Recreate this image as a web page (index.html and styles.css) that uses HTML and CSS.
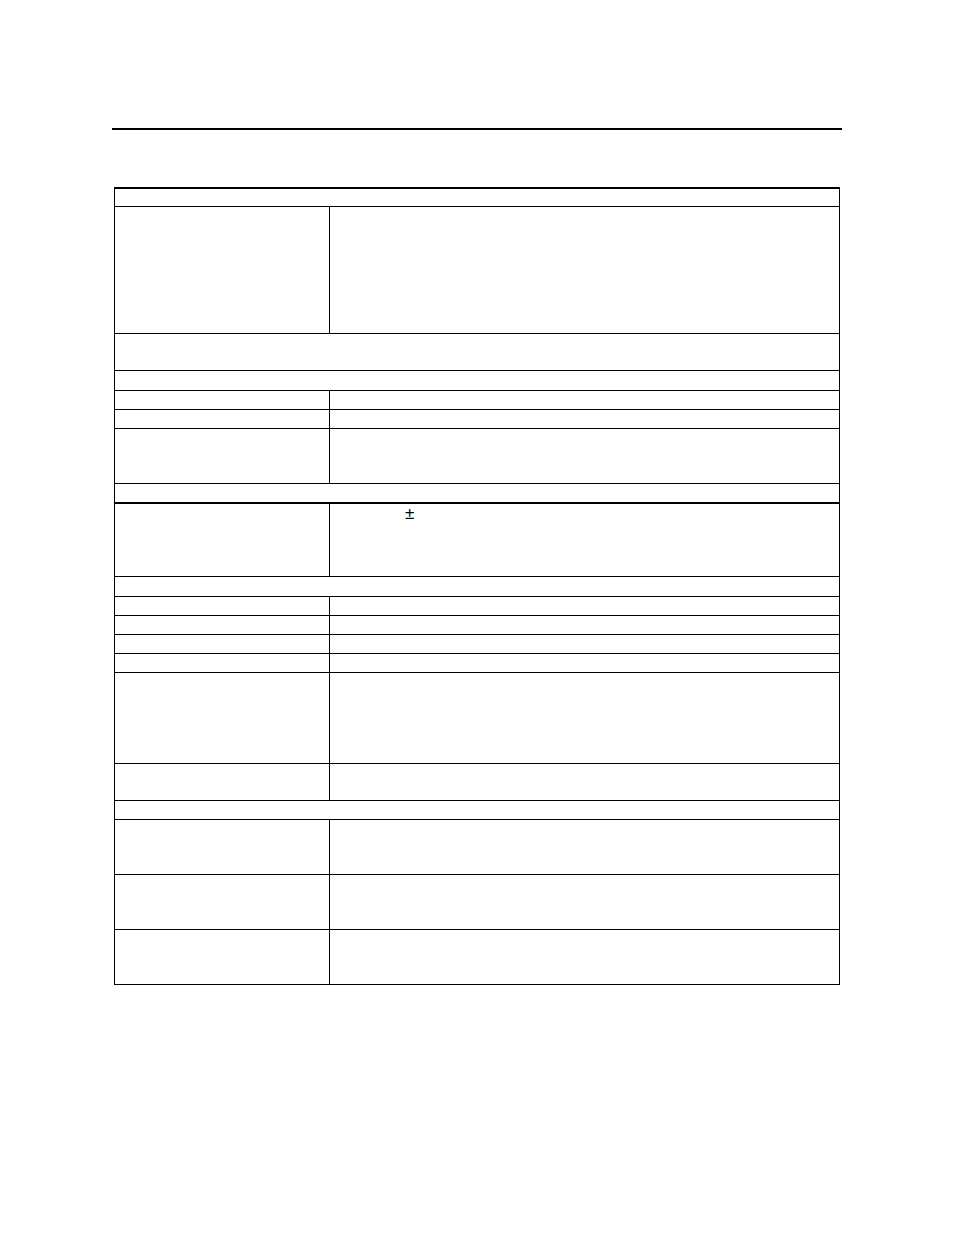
FILE: index.html
```html
<!DOCTYPE html>
<html>
<head>
<meta charset="utf-8">
<link rel="stylesheet" href="styles.css">
</head>
<body>
<div class="page">
  <div class="rule"></div>
  <div class="spec">
    <div class="row full h17"></div>
    <div class="row h126"><div class="lc"></div><div class="rc"></div></div>
    <div class="row full h36"></div>
    <div class="row full h19"></div>
    <div class="row h18"><div class="lc"></div><div class="rc"></div></div>
    <div class="row h18"><div class="lc"></div><div class="rc"></div></div>
    <div class="row h54"><div class="lc"></div><div class="rc"></div></div>
    <div class="row full h18 thick"></div>
    <div class="row h72"><div class="lc"></div><div class="rc"><span class="pm">±</span></div></div>
    <div class="row full h19"></div>
    <div class="row h18"><div class="lc"></div><div class="rc"></div></div>
    <div class="row h18"><div class="lc"></div><div class="rc"></div></div>
    <div class="row h18"><div class="lc"></div><div class="rc"></div></div>
    <div class="row h18"><div class="lc"></div><div class="rc"></div></div>
    <div class="row h90"><div class="lc"></div><div class="rc"></div></div>
    <div class="row h36"><div class="lc"></div><div class="rc"></div></div>
    <div class="row full h18"></div>
    <div class="row h54"><div class="lc"></div><div class="rc"></div></div>
    <div class="row h54"><div class="lc"></div><div class="rc"></div></div>
    <div class="row h54"><div class="lc"></div><div class="rc"></div></div>
  </div>
</div>
</body>
</html>
```

FILE: styles.css
```css
html, body {
  margin: 0;
  padding: 0;
  background: #ffffff;
}
body {
  font-family: "Liberation Sans", Arial, sans-serif;
  font-size: 13px;
  color: #000000;
}
.page {
  padding-top: 128px;
  padding-left: 112px;
  display: flex;
  flex-direction: column;
}
.rule {
  width: 730px;
  height: 2px;
  background: #000000;
}
.spec {
  margin-top: 57px;
  margin-left: 2px;
  width: 724px;
  border-top: 2px solid #000000;
  border-left: 1px solid #000000;
  border-right: 1px solid #000000;
  display: flex;
  flex-direction: column;
}
.row {
  display: flex;
  border-bottom: 1px solid #000000;
  box-sizing: content-box;
}
.row.thick {
  border-bottom: 2px solid #000000;
}
.lc {
  width: 214px;
  border-right: 1px solid #000000;
}
.rc {
  flex: 1;
  line-height: 18px;
}
.pm {
  display: inline-block;
  margin-left: 75px;
  margin-top: 1px;
  font-size: 17px;
  line-height: 18px;
}
.h17 { height: 17px; }
.h18 { height: 18px; }
.h19 { height: 19px; }
.h36 { height: 36px; }
.h54 { height: 54px; }
.h72 { height: 72px; }
.h90 { height: 90px; }
.h126 { height: 126px; }
```
